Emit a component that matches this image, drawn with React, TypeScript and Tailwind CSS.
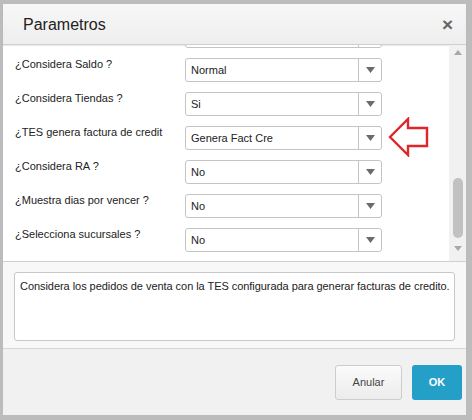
import React from "react";

// ── Parameter rows (the first one is scrolled almost out of view) ──────────
const ROWS = [
  { label: "", value: "" },
  { label: "¿Considera Saldo ?", value: "Normal" },
  { label: "¿Considera Tiendas ?", value: "Si" },
  { label: "¿TES genera factura de credit", value: "Genera Fact Cre", marked: true },
  { label: "¿Considera RA ?", value: "No" },
  { label: "¿Muestra dias por vencer ?", value: "No" },
  { label: "¿Selecciona sucursales ?", value: "No" },
];

function Caret() {
  return (
    <svg width="9" height="6" viewBox="0 0 9 6">
      <polygon points="0,0 9,0 4.5,6" fill="#6b6b6b" />
    </svg>
  );
}

function PointerArrow() {
  return (
    <svg width="42" height="40" viewBox="0 0 42 40">
      <polygon
        points="2,20 20,2 20,11 39,11 39,29 20,29 20,38"
        fill="white"
        stroke="#e0262b"
        strokeWidth={2.4}
        strokeLinejoin="miter"
      />
    </svg>
  );
}

function SelectBox({ value }: { value: string }) {
  return (
    <div className="flex h-[24px] w-[197px] shrink-0 items-stretch rounded-[3px] border border-[#c4c4c4] bg-white">
      <div className="flex flex-1 items-center pl-[5px] text-[11px] text-[#222]">{value}</div>
      <div className="flex w-[23px] items-center justify-center border-l border-[#c4c4c4]">
        <Caret />
      </div>
    </div>
  );
}

export default function App() {
  return (
    <div
      className="h-[420px] w-[472px] bg-[#bcbcbc] pl-[3px] pt-[4px]"
      style={{ fontFamily: '"Liberation Sans", Arial, sans-serif' }}
    >
      <div className="flex h-[411px] w-[463px] flex-col bg-white">
        {/* Header */}
        <div className="flex h-[41px] shrink-0 items-center justify-between border-b border-[#cfcfcf] bg-gradient-to-b from-[#f7f7f7] to-[#eeeeee] pl-[20px] pr-[13px] shadow-[0_1px_1px_rgba(0,0,0,0.08)]">
          <span className="pt-[2px] text-[16px] text-[#222]">Parametros</span>
          <span className="text-[19px] font-bold leading-none text-[#666]">×</span>
        </div>

        {/* Scrolling parameter list */}
        <div className="flex h-[217px] shrink-0 border-b border-[#cfcfcf]">
          <div className="flex-1 overflow-hidden">
            <div className="-mt-[21px] flex flex-col">
              {ROWS.map((r, i) => (
                <div key={i} className="flex h-[34px] items-start">
                  <div className="-mt-[1px] w-[182px] shrink-0 overflow-hidden whitespace-nowrap pl-[12px] text-[11px] leading-[14px] text-[#222]">
                    {r.label}
                  </div>
                  <SelectBox value={r.value} />
                  {r.marked && (
                    <div className="-mt-[9px] ml-[6px]">
                      <PointerArrow />
                    </div>
                  )}
                </div>
              ))}
            </div>
          </div>
          {/* Scrollbar */}
          <div className="flex w-[17px] flex-col items-center bg-[#f1f1f1] py-[5px]">
            <svg width="8" height="5" viewBox="0 0 8 5">
              <polygon points="4,0 8,5 0,5" fill="#a8a8a8" />
            </svg>
            <div className="mt-[123px] h-[60px] w-[10px] rounded-[5px] bg-[#c1c1c1]" />
            <div className="mt-[8px]">
              <svg width="8" height="5" viewBox="0 0 8 5">
                <polygon points="0,0 8,0 4,5" fill="#a8a8a8" />
              </svg>
            </div>
          </div>
        </div>

        {/* Description */}
        <div className="h-[86px] shrink-0 bg-[#f8f8f8] px-[11px] pt-[10px]">
          <div className="h-[69px] rounded-[3px] border border-[#c8c8c8] bg-white px-[5px] pt-[6px] text-[11px] leading-[14px] whitespace-nowrap tracking-[-0.05px] text-[#222]">
            Considera los pedidos de venta con la TES configurada para generar facturas de credito.
          </div>
        </div>

        {/* Footer */}
        <div className="flex flex-1 items-start justify-end gap-[10px] border-t border-[#d6d6d6] bg-[#f1f1f1] pr-[4px] pt-[16px]">
          <button className="h-[35px] w-[67px] rounded-[3px] border border-[#cdcdcd] bg-gradient-to-b from-[#fbfbfb] to-[#ececec] text-[11px] text-[#444]">
            Anular
          </button>
          <button className="h-[35px] w-[50px] rounded-[3px] bg-[#249fc8] text-[11px] font-bold text-white">
            OK
          </button>
        </div>
      </div>
    </div>
  );
}
